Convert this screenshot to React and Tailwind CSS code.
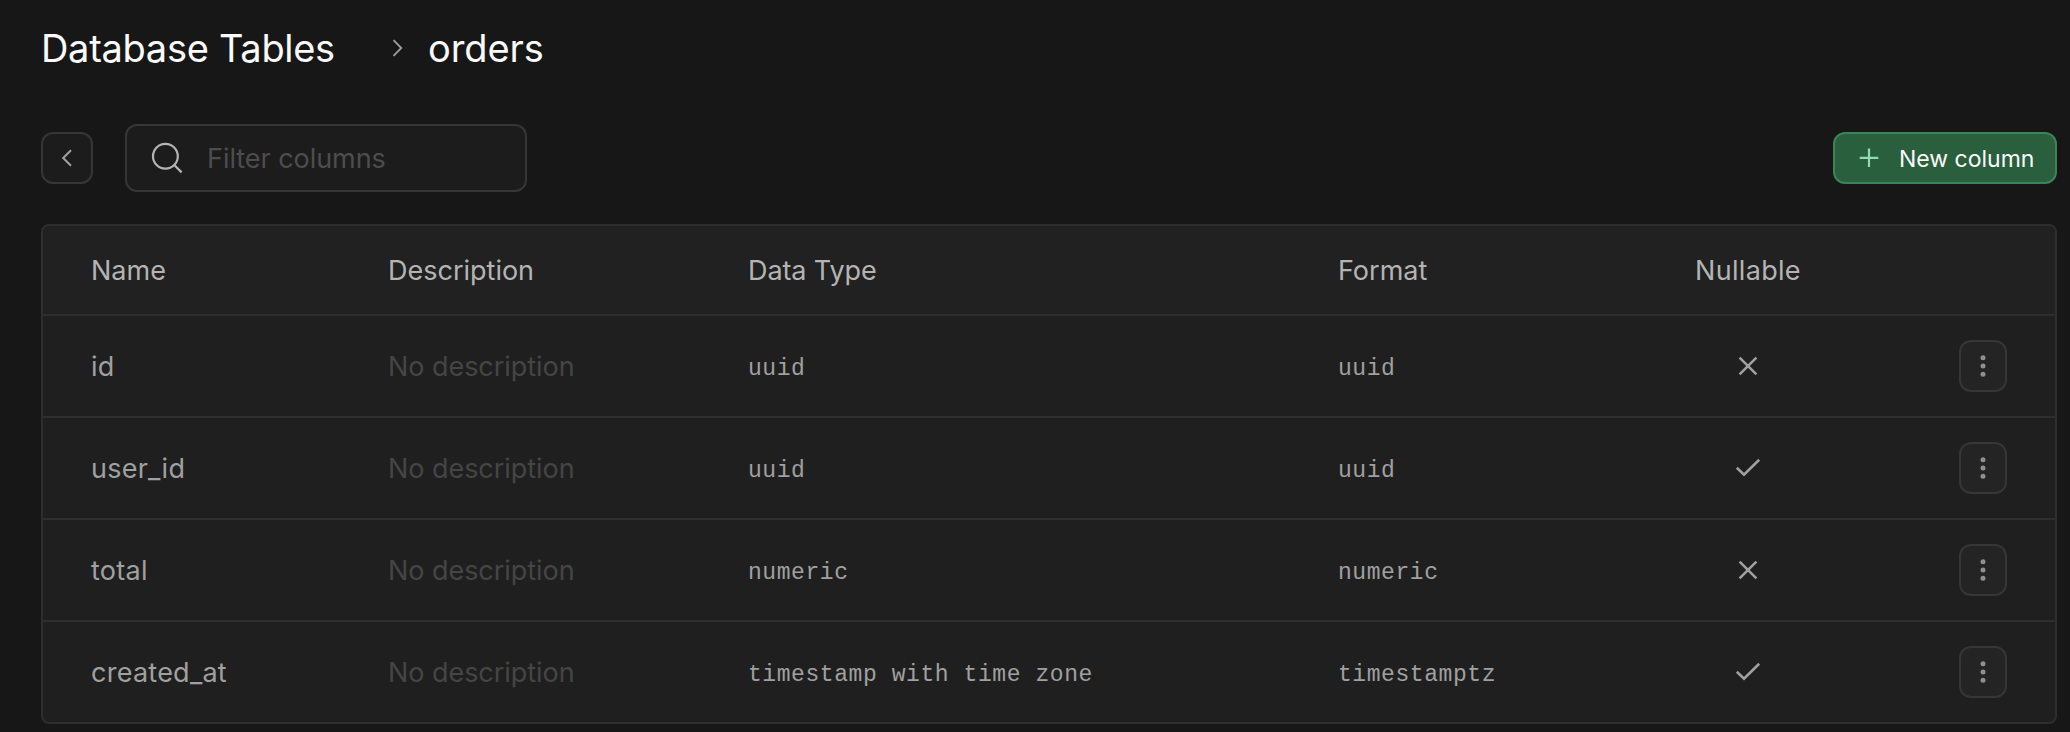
const COLUMNS = [
  { name: "id", type: "uuid", format: "uuid", nullable: false },
  { name: "user_id", type: "uuid", format: "uuid", nullable: true },
  { name: "total", type: "numeric", format: "numeric", nullable: false },
  { name: "created_at", type: "timestamp with time zone", format: "timestamptz", nullable: true },
];

function Stroke({ className, width, height, strokeWidth = 2, children }) {
  return (
    <svg
      className={className}
      width={width}
      height={height}
      viewBox={`0 0 ${width} ${height}`}
      fill="none"
      stroke="currentColor"
      strokeWidth={strokeWidth}
      strokeLinecap="butt"
      strokeLinejoin="miter"
    >
      {children}
    </svg>
  );
}

function NullableIcon({ nullable }) {
  return (
    <Stroke width={26} height={24} strokeWidth={2.6} className="text-[#a0a0a0]">
      {nullable ? <path d="M1.8 11.8 9 18.8 24.2 3.8" /> : <path d="M4.6 3.6 21.4 20.4M21.4 3.6 4.6 20.4" />}
    </Stroke>
  );
}

function Mono({ children }) {
  return (
    <div className="translate-y-[3px] whitespace-nowrap font-['Liberation_Mono',monospace] text-[23px] tracking-[0.57px] text-[#a0a0a0]">
      {children}
    </div>
  );
}

const GRID = "grid grid-cols-[297px_360px_590px_304px_212px_1fr] items-center pl-12 pr-12";

export default function App() {
  return (
    <div className="h-[732px] w-full overflow-hidden bg-[#171717] pl-[41px] pr-[13px] font-['Inter',sans-serif] text-[27px] leading-none">
      <div className="flex h-24 items-center text-[38px] tracking-[-0.3px] text-[#fafafa]">
        <h1 className="w-[348px]">Database Tables</h1>
        <Stroke width={16} height={20} strokeWidth={1.8} className="text-[#a0a0a0]">
          <path d="M4.5 2.2 12.3 10 4.5 17.8" />
        </Stroke>
        <span className="ml-[23px] tracking-[-0.1px]">orders</span>
      </div>

      <div className="mt-7 flex h-[68px] items-center">
        <button className="flex size-[52px] items-center justify-center rounded-xl border-2 border-[#363636] bg-[#1c1c1c] text-[#a0a0a0]">
          <Stroke width={20} height={20}>
            <path d="M14 2.2 6.2 10 14 17.8" />
          </Stroke>
        </button>
        <div className="ml-8 flex h-[68px] w-[402px] items-center rounded-xl border-2 border-[#363636] bg-[#1c1c1c] pl-[23px]">
          <Stroke width={34} height={34} strokeWidth={2.2} className="text-[#b4b4b4]">
            <circle cx="15.4" cy="15.2" r="12.4" />
            <path d="M24 23.8 31.6 31.4" />
          </Stroke>
          <span className="ml-[23px] tracking-[-0.05px] text-[#4d4d4d]">Filter columns</span>
        </div>
        <button className="ml-auto flex h-[52px] w-56 items-center rounded-xl border-2 border-[#3d8358] bg-[#2a5f3e] pl-[23px] text-[23px] text-[#fafafa]">
          <Stroke width={24} height={24} strokeWidth={2.2} className="text-[#8fdcb0]">
            <path d="M11 2.5v18.6M1.7 11.8h18.6" />
          </Stroke>
          <span className="ml-[17px] translate-y-px">New column</span>
        </button>
      </div>

      <div className="mt-8 overflow-hidden rounded-lg border-2 border-[#2e2e2e] bg-[#1f1f1f]">
        <div className={`${GRID} h-[88px] bg-[#212121] text-[#b4b4b4]`}>
          <div>Name</div>
          <div>Description</div>
          <div className="tracking-[-0.1px]">Data Type</div>
          <div>Format</div>
          <div className="text-center tracking-[0.3px]">Nullable</div>
          <div />
        </div>
        {COLUMNS.map((c) => (
          <div key={c.name} className={`${GRID} h-[102px] border-t-2 border-[#2e2e2e] text-[#a0a0a0]`}>
            <div className="tracking-[0.25px]">{c.name}</div>
            <div className="tracking-[-0.05px] text-[#454545]">No description</div>
            <Mono>{c.type}</Mono>
            <Mono>{c.format}</Mono>
            <div className="flex justify-center">
              <NullableIcon nullable={c.nullable} />
            </div>
            <button className="ml-auto flex h-[52px] w-12 items-center justify-center rounded-xl border-2 border-[#363636] bg-[#242424]">
              <svg width="6" height="24" viewBox="0 0 6 24" fill="#8f8f8f">
                <circle cx="3" cy="3.8" r="2.5" />
                <circle cx="3" cy="12" r="2.5" />
                <circle cx="3" cy="20.2" r="2.5" />
              </svg>
            </button>
          </div>
        ))}
      </div>
    </div>
  );
}
